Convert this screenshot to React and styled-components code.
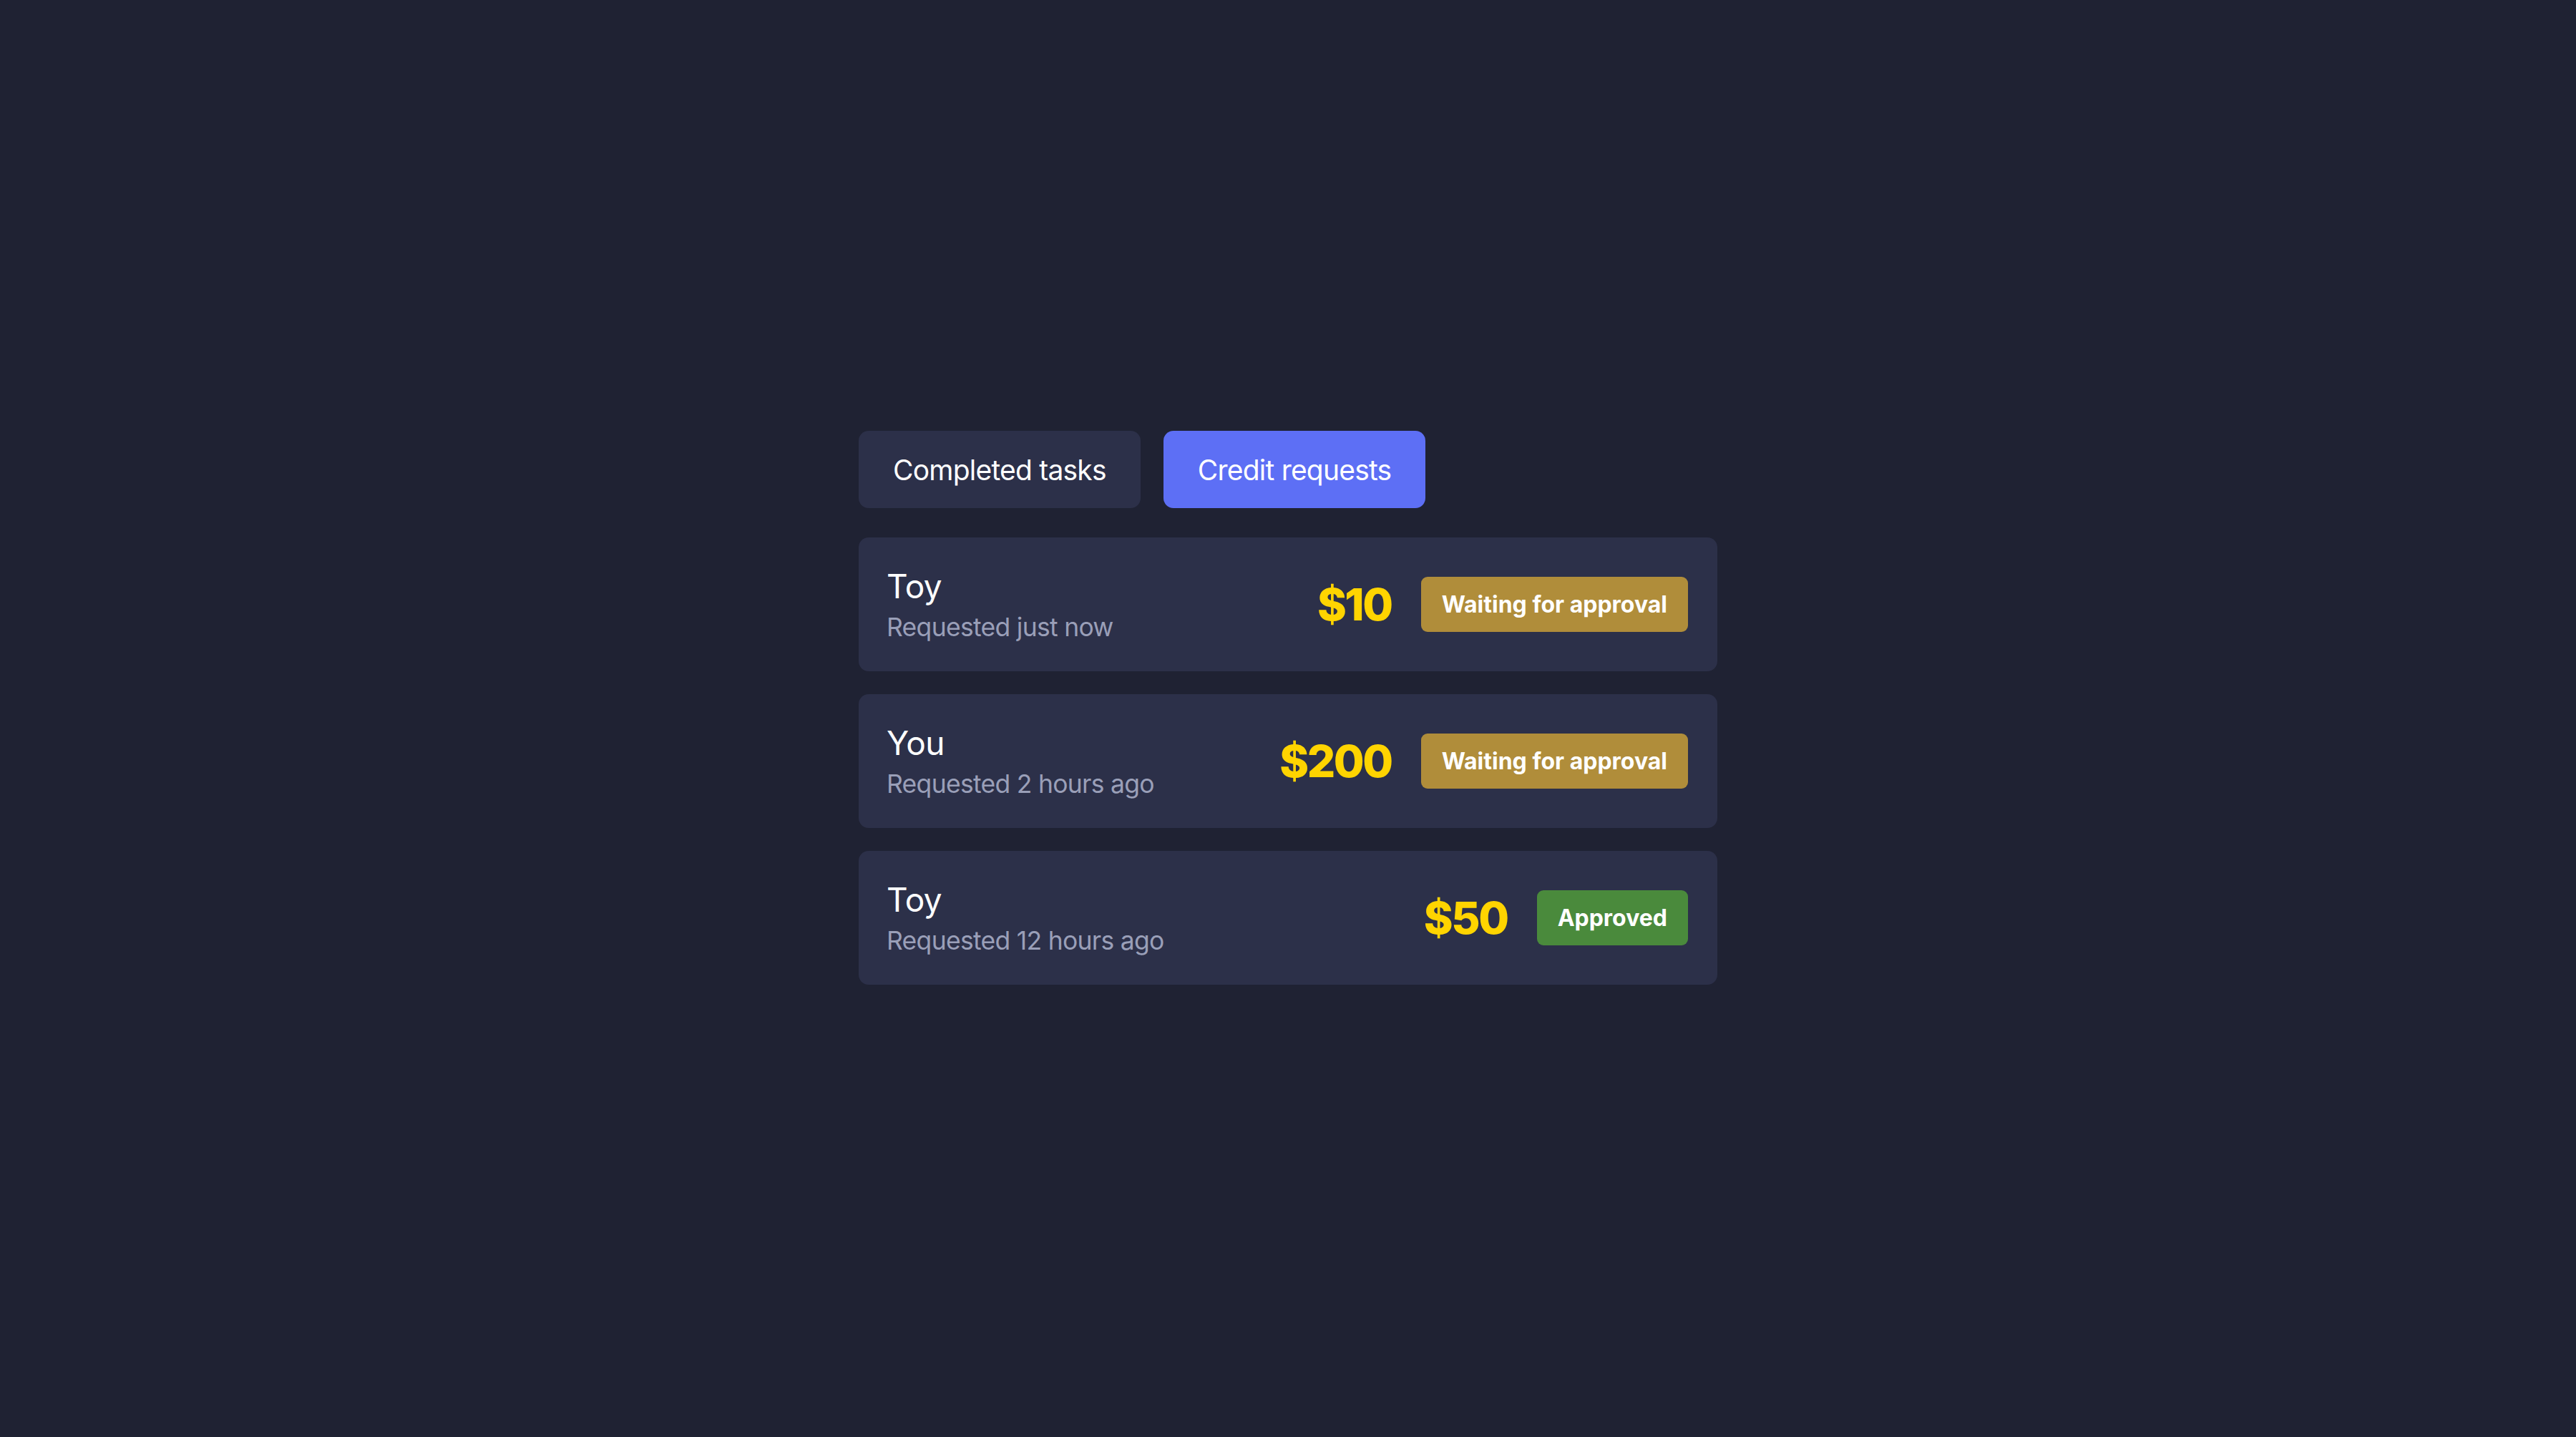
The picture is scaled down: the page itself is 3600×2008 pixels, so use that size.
import React from 'react'
import styled, { createGlobalStyle } from 'styled-components'

const GlobalStyle = createGlobalStyle`
    html, body {
        margin: 0;
        padding: 0;
        background: #1f2233;
    }
    body {
        font-family: Inter, "Noto Sans", "Liberation Sans", sans-serif;
        color: #ffffff;
    }
`

const Page = styled.div`
    min-height: 100vh;
    display: flex;
    justify-content: center;
    padding-top: 602px;
    box-sizing: border-box;
`

const Panel = styled.div`
    width: 1200px;
    display: flex;
    flex-direction: column;
`

const Tabs = styled.div`
    display: flex;
    gap: 32px;
    margin-bottom: 41px;
`

const Tab = styled.button`
    height: 108px;
    padding: 0 48px;
    border: none;
    border-radius: 14px;
    font-family: inherit;
    font-size: 39px;
    letter-spacing: -0.02em;
    color: #ffffff;
    background: ${props => props.active ? '#5d6ff5' : '#2c3049'};
    cursor: pointer;
`

const List = styled.div`
    display: flex;
    flex-direction: column;
    gap: 32px;
`

const Card = styled.div`
    height: 187px;
    box-sizing: border-box;
    padding: 0 41px 0 39px;
    border-radius: 14px;
    background: #2c3049;
    display: flex;
    align-items: center;
    justify-content: space-between;
`

const Info = styled.div`
    display: flex;
    flex-direction: column;
`

const Title = styled.div`
    font-size: 46px;
    line-height: 64px;
    letter-spacing: -0.01em;
    color: #ffffff;
`

const Sub = styled.div`
    font-size: 35.5px;
    line-height: 51px;
    letter-spacing: -0.02em;
    color: #9a9fb8;
`

const Right = styled.div`
    display: flex;
    align-items: center;
    gap: 41px;
`

const Amount = styled.div`
    font-size: 62px;
    font-weight: 800;
    letter-spacing: -0.04em;
    color: #ffd400;
`

const Badge = styled.div`
    height: 77px;
    padding: 0 29px;
    border-radius: 9px;
    display: flex;
    align-items: center;
    font-size: 32px;
    font-weight: 700;
    color: #ffffff;
    background: ${props => props.approved ? '#4a8a3c' : '#b08d3a'};
`

const requests = [
    { name: 'Toy', when: 'Requested just now', amount: 10, approved: false },
    { name: 'You', when: 'Requested 2 hours ago', amount: 200, approved: false },
    { name: 'Toy', when: 'Requested 12 hours ago', amount: 50, approved: true },
]

function App() {
    return (
        <Page>
            <GlobalStyle />
            <Panel>
                <Tabs>
                    <Tab>Completed tasks</Tab>
                    <Tab active>Credit requests</Tab>
                </Tabs>
                <List>
                    {requests.map((r, i) => (
                        <Card key={i}>
                            <Info>
                                <Title>{r.name}</Title>
                                <Sub>{r.when}</Sub>
                            </Info>
                            <Right>
                                <Amount>${r.amount}</Amount>
                                <Badge approved={r.approved}>
                                    {r.approved ? 'Approved' : 'Waiting for approval'}
                                </Badge>
                            </Right>
                        </Card>
                    ))}
                </List>
            </Panel>
        </Page>
    )
}

export default App
